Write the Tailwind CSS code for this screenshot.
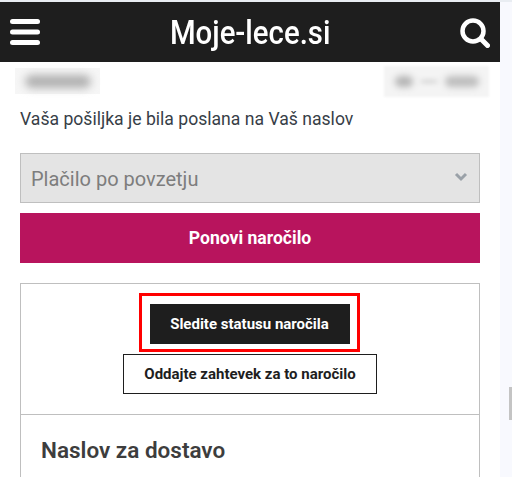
<!DOCTYPE html>
<html lang="sl">
<head>
<meta charset="utf-8">
<script src="https://cdn.jsdelivr.net/npm/@tailwindcss/browser@4"></script>
</head>
<body class="bg-[#f8f9fe] font-['Roboto',sans-serif] overflow-hidden">
<div class="relative h-[477px] w-[512px]">
  <div class="h-[2px] w-full bg-[#e9edf2]"></div>
  <div class="h-[475px] w-[500px] overflow-hidden bg-white">
    <header class="flex h-[60px] items-center justify-between bg-[#1e1e1e] pl-[10px] pr-[10px]">
      <svg width="30" height="28" viewBox="0 0 30 28" class="mt-[-1px]"><g stroke="#fff" stroke-width="5" stroke-linecap="round"><line x1="2.5" y1="3.5" x2="27.5" y2="3.5"/><line x1="2.5" y1="14" x2="27.5" y2="14"/><line x1="2.5" y1="24.5" x2="27.5" y2="24.5"/></g></svg>
      <div class="scale-x-[0.89] text-[33px] leading-none font-medium text-white">Moje-lece.si</div>
      <svg width="30" height="30" viewBox="0 0 30 30" class="mt-[1px]"><circle cx="13" cy="13" r="10.5" fill="none" stroke="#fff" stroke-width="4.5"/><line x1="21" y1="21" x2="27.5" y2="27.5" stroke="#fff" stroke-width="5" stroke-linecap="round"/></svg>
    </header>
    <div class="flex h-[45px] items-start justify-between pr-[11px] pl-[15px]">
      <div class="mt-[6px] flex h-[26px] w-[85px] items-center justify-center bg-[#f6f6f6]"><div class="h-[13px] w-[66px] rounded-full bg-[#b0b0b0] blur-[4px]"></div></div>
      <div class="mt-[4px] flex h-[31px] w-[105px] items-center justify-center gap-[8px] bg-[#f4f4f4] blur-[1px]"><div class="h-[11px] w-[18px] rounded-full bg-[#b5b5b5] blur-[3px]"></div><div class="h-[3px] w-[16px] bg-[#d0d0d0] blur-[2px]"></div><div class="h-[11px] w-[34px] rounded-full bg-[#bdbdbd] blur-[3px]"></div></div>
    </div>
    <div class="px-[20px]">
      <p class="text-[17.6px] leading-[24px] text-[#373e47]">Vaša pošiljka je bila poslana na Vaš naslov</p>
      <div class="mt-[22px] flex h-[50px] items-center justify-between border border-[#bfbfbf] bg-[#e4e4e4] pr-[11px] pl-[10px]">
        <span class="mt-[2px] text-[20px] text-[#7d7d7d]">Plačilo po povzetju</span>
        <svg width="14" height="10" viewBox="0 0 14 10" class="mt-[-2px]"><path d="M2 2 L7 7 L12 2" fill="none" stroke="#9aa1a8" stroke-width="3"/></svg>
      </div>
      <button class="mt-[10px] flex h-[50px] w-full items-center justify-center bg-[#b8145d] text-[17.6px] font-bold text-white">Ponovi naročilo</button>
      <div class="mt-[20px] border border-[#bfbfbf]">
        <div class="flex h-[131px] flex-col items-center border-b border-[#bfbfbf] pt-[9px]">
          <div class="mr-[2px] border-[3px] border-[#ff0000] pt-[8px] pr-[7px] pb-[5px] pl-[8px]">
            <button class="flex h-[40px] w-[200px] items-center justify-center bg-[#1e1e1e] text-[15px] font-bold text-white">Sledite statusu naročila</button>
          </div>
          <button class="mt-[2px] flex h-[40px] w-[254px] items-center justify-center border border-[#1e1e1e] bg-white text-[15px] font-bold text-[#1e1e1e]">Oddajte zahtevek za to naročilo</button>
        </div>
        <h2 class="h-[200px] pt-[20px] pl-[20px] text-[22.5px] leading-[30px] font-semibold text-[#3d3d3d]">Naslov za dostavo</h2>
      </div>
    </div>
  </div>
  <div class="absolute top-[387px] left-[509px] h-[33px] w-[3px] bg-[#c4c4c4]"></div>
</div>
</body>
</html>
